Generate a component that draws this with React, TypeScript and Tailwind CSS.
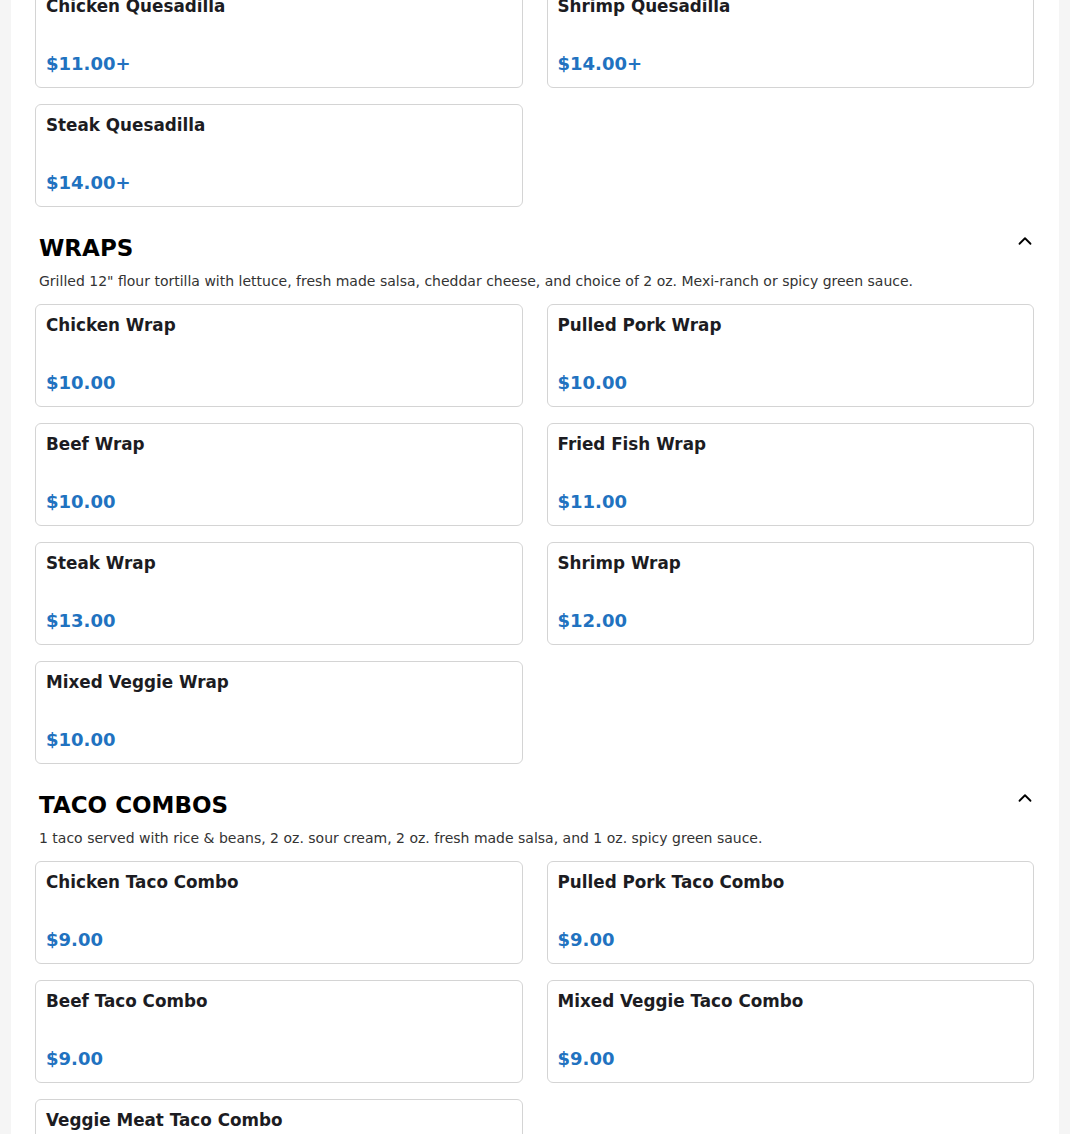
import { ChevronUp } from "lucide-react";

type Item = { name: string; price: string };
type Section = { title?: string; desc?: string; items: Item[] };

const sections: Section[] = [
  {
    items: [
      { name: "Chicken Quesadilla", price: "$11.00+" },
      { name: "Shrimp Quesadilla", price: "$14.00+" },
      { name: "Steak Quesadilla", price: "$14.00+" },
    ],
  },
  {
    title: "WRAPS",
    desc: 'Grilled 12" flour tortilla with lettuce, fresh made salsa, cheddar cheese, and choice of 2 oz. Mexi-ranch or spicy green sauce.',
    items: [
      { name: "Chicken Wrap", price: "$10.00" },
      { name: "Pulled Pork Wrap", price: "$10.00" },
      { name: "Beef Wrap", price: "$10.00" },
      { name: "Fried Fish Wrap", price: "$11.00" },
      { name: "Steak Wrap", price: "$13.00" },
      { name: "Shrimp Wrap", price: "$12.00" },
      { name: "Mixed Veggie Wrap", price: "$10.00" },
    ],
  },
  {
    title: "TACO COMBOS",
    desc: "1 taco served with rice & beans, 2 oz. sour cream, 2 oz. fresh made salsa, and 1 oz. spicy green sauce.",
    items: [
      { name: "Chicken Taco Combo", price: "$9.00" },
      { name: "Pulled Pork Taco Combo", price: "$9.00" },
      { name: "Beef Taco Combo", price: "$9.00" },
      { name: "Mixed Veggie Taco Combo", price: "$9.00" },
      { name: "Veggie Meat Taco Combo", price: "$9.00" },
    ],
  },
];

function MenuCard({ item }: { item: Item }) {
  return (
    <div className="flex h-[103px] flex-col justify-between rounded-md border border-[#d4d4d4] bg-white px-[10px] pt-[10px] pb-[13px]">
      <p className="text-[16.8px] leading-[21px] font-bold text-[#1c1c22]">{item.name}</p>
      <p className="text-[18px] leading-[21px] font-bold text-[#2172c0]">{item.price}</p>
    </div>
  );
}

export default function App() {
  return (
    <div
      className="h-[1134px] overflow-hidden bg-[#f5f5f5]"
      style={{ fontFamily: '"DejaVu Sans", Verdana, sans-serif' }}
    >
      <div className="mx-[11px] flow-root h-full bg-white pl-6 pr-[25px]">
        {sections.map((s, i) => (
          <section key={i} className={i === 0 ? "-mt-[15px]" : "mt-[25px]"}>
            {s.title && (
              <>
                <div className="flex items-center justify-between px-1">
                  <h2 className="text-[23px] leading-[32px] font-bold text-black">{s.title}</h2>
                  <ChevronUp className="-mt-[14px] mr-[-6px] h-[22px] w-[22px] text-black" strokeWidth={2} />
                </div>
                <p className="mt-[7px] px-1 text-[14px] leading-[20px] text-[#333]">{s.desc}</p>
              </>
            )}
            <div className={`grid grid-cols-2 gap-x-6 gap-y-4 ${s.title ? "mt-[13px]" : ""}`}>
              {s.items.map((it) => (
                <MenuCard key={it.name} item={it} />
              ))}
            </div>
          </section>
        ))}
      </div>
    </div>
  );
}
